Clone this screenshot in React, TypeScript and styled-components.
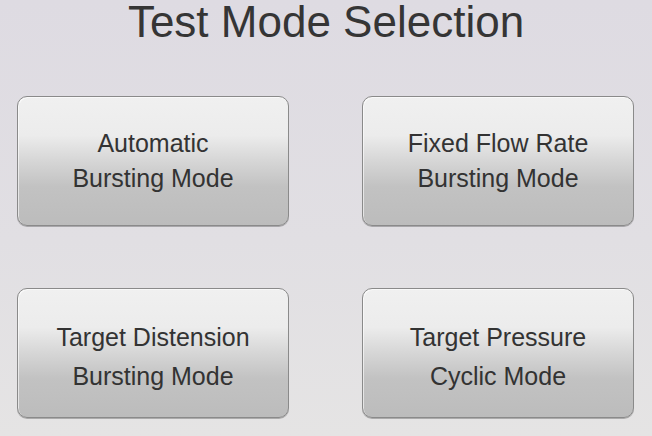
import React from 'react';
import styled, { createGlobalStyle } from 'styled-components';

const GlobalStyle = createGlobalStyle`
  html, body {
    margin: 0;
    padding: 0;
  }
  body {
    width: 652px;
    height: 436px;
    overflow: hidden;
    font-family: "Liberation Sans", Arial, sans-serif;
  }
`;

const Screen = styled.div`
  width: 652px;
  height: 436px;
  box-sizing: border-box;
  padding: 0 17px;
  background: linear-gradient(to bottom, #dedbe2 0%, #e1dfe3 55%, #e5e4e4 100%);
  display: flex;
  flex-direction: column;
  align-items: flex-start;
`;

const Title = styled.h1`
  margin: 0;
  width: 100%;
  height: 44px;
  font-size: 44px;
  line-height: 44px;
  font-weight: 400;
  color: #353535;
  text-align: center;
`;

const ModeGrid = styled.div`
  margin-top: 52px;
  display: grid;
  grid-template-columns: 272px 272px;
  grid-auto-rows: 130px;
  column-gap: 73px;
  row-gap: 62px;
`;

const ModeButton = styled.button<{ $lineHeight: number; $shift: number }>`
  box-sizing: border-box;
  width: 272px;
  height: 130px;
  margin: 0;
  padding: ${(p) => p.$shift}px 0 0;
  border: 1px solid #8a8a8a;
  border-radius: 10px;
  background: linear-gradient(
    to bottom,
    #f0f0f0 0%,
    #ececec 30%,
    #d6d6d6 50%,
    #c2c2c2 70%,
    #bcbcbc 100%
  );
  box-shadow: inset 1px 1px 0 rgba(255, 255, 255, 0.6), 0 1px 0 rgba(0, 0, 0, 0.25);
  font-family: "Liberation Sans", Arial, sans-serif;
  font-size: 25px;
  line-height: ${(p) => p.$lineHeight}px;
  color: #333333;
  text-align: center;
  display: flex;
  flex-direction: column;
  align-items: center;
  justify-content: center;
  cursor: pointer;
`;

const modes = [
  { lines: ['Automatic', 'Bursting Mode'], lineHeight: 35, shift: 0 },
  { lines: ['Fixed Flow Rate', 'Bursting Mode'], lineHeight: 35, shift: 0 },
  { lines: ['Target Distension', 'Bursting Mode'], lineHeight: 39, shift: 8 },
  { lines: ['Target Pressure', 'Cyclic Mode'], lineHeight: 39, shift: 8 },
];

export default function App() {
  return (
    <>
      <GlobalStyle />
      <Screen>
        <Title>Test Mode Selection</Title>
        <ModeGrid>
          {modes.map((m) => (
            <ModeButton key={m.lines.join(' ')} $lineHeight={m.lineHeight} $shift={m.shift}>
              {m.lines.map((l) => (
                <span key={l}>{l}</span>
              ))}
            </ModeButton>
          ))}
        </ModeGrid>
      </Screen>
    </>
  );
}
